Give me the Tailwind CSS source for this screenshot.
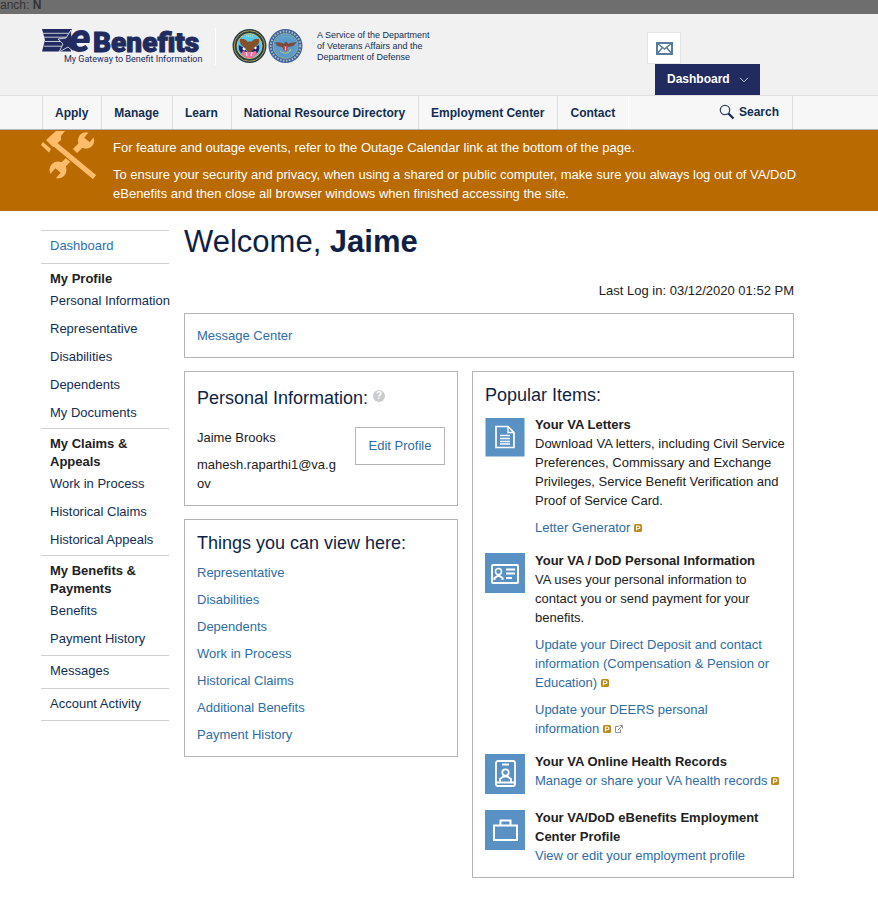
<!DOCTYPE html>
<html lang="en">
<head>
<meta charset="utf-8">
<meta name="viewport" content="width=device-width, initial-scale=1">
<title>eBenefits Dashboard</title>
<script src="https://cdn.jsdelivr.net/npm/@tailwindcss/browser@4"></script>
</head>
<body class="bg-white font-['Liberation_Sans',Arial,sans-serif] text-[13px] leading-[19px] text-[#212121]">
<svg class="hidden" aria-hidden="true">
  <symbol id="premium" viewBox="0 0 8 8"><rect width="8" height="8" rx="1.6" fill="#b8891b"/><path d="M2.5 6.5V2h2.1a1.3 1.3 0 0 1 0 2.7H2.5" fill="none" stroke="#fff" stroke-width="1.1"/></symbol>
</svg>

<div class="h-[14px] overflow-hidden bg-[#6e6e6e] text-[12px] text-[#333]"><p class="-mt-1 leading-[18px]">anch: <b>N</b></p></div>

<header class="bg-[#f1f1f1]">
  <div class="flex h-[81px] pl-[42px] pr-[84px]">
    <a href="#" class="mt-[14px] block h-[37px] w-[174px] border-r border-white" aria-label="eBenefits, My Gateway to Benefit Information">
      <svg width="160" height="37" viewBox="0 0 160 37" class="overflow-visible">
        <g fill="#212b5f">
          <path d="M0 1h30l-3 8 2 14.500H0L3 12z"/>
          <path d="M1 5.300h26M2 9.200h23M3 13.500h18M2 18.200h20" stroke="#f1f1f1" stroke-width=".8"/>
          <path d="M29 2l1 8 9 1-8 5 1 8-6-5-9 5 4-8-5-5 8-1z" stroke="#f1f1f1" stroke-width=".8"/>
          <text x="27" y="23.500" font-family="Roboto, sans-serif" font-weight="900" font-style="italic" font-size="41">e</text>
          <text x="51" y="23.500" font-family="Roboto, sans-serif" font-weight="900" font-size="28" stroke="#212b5f" stroke-width="1">Benefits</text>
          <text x="22" y="34" font-family="Roboto, sans-serif" font-weight="400" font-size="9">My Gateway to Benefit Information</text>
        </g>
      </svg>
    </a>
    <div class="ml-4 mt-[14px] flex gap-px">
      <svg width="35" height="36" viewBox="0 0 35 36" role="img" aria-label="Department of Veterans Affairs seal">
        <circle cx="17.500" cy="18" r="17" fill="#29404a"/><circle cx="17.500" cy="18" r="15.300" fill="none" stroke="#a9984b" stroke-width="1"/>
        <circle cx="17.500" cy="18" r="12.500" fill="#54c8ee" stroke="#d8c05a"/>
        <path d="M7 17l5 3 5 6 5-6 5-3c1 5-1 8-4 10H12c-4-2-6-5-5-10z" fill="#24246e"/>
        <path d="M11 23l3 1 3-1 3 1 4-1 1 3-5 4h-6l-5-4z" fill="#f0729a"/><path d="M14 24l1 4M20 24l-1 4" stroke="#fff" fill="none"/>
        <path d="M8 11c4-1 6 1 8 3l2-1 1 1c2-2 4-4 8-3 1 5-2 7-5 9l-3 4h-3l-3-4c-3-2-6-4-5-9z" fill="#85512a"/>
        <path d="M11 20l2 2M23 21l1-2" stroke="#fff" stroke-width="2" fill="none"/><path d="M14 8h7" stroke="#d5efbd" stroke-dasharray="1 1"/>
      </svg>
      <svg width="35" height="36" viewBox="0 0 35 36" role="img" aria-label="Department of Defense seal">
        <circle cx="17.500" cy="18" r="17" fill="#3f639b"/><circle cx="17.500" cy="18" r="14.700" fill="none" stroke="#aebccc" stroke-width="2" stroke-dasharray="1.500 1.500"/>
        <circle cx="17.500" cy="18" r="12.500" fill="#5b9bcb" stroke="#8fae8f"/>
        <path d="M9 13a10 10 0 0 1 17 0" stroke="#8cb8b0" stroke-dasharray="1 1" fill="none"/>
        <path d="M7 14l7 1 2 1 1-2 2 0 1 2 2-1 7-1-4 4-5 1-2 3h-2l-2-3-5-1z" fill="#7b4a3d"/>
        <path d="M15.500 18h4v4l-2 2-2-2z" fill="#c44c56"/><path d="M17.500 18.500v4" stroke="#fff" stroke-width=".7"/>
        <path d="M12 23c3 3 8 3 11-1M21 24l2-3" stroke="#bfc46a" fill="none"/>
      </svg>
    </div>
    <p class="ml-[14px] mt-4 w-[120px] text-[9px] leading-[11px] text-[#112e51]">A Service of the Department of Veterans Affairs and the Department of Defense</p>
    <div class="ml-auto mr-[34px] mt-[18px] flex flex-col">
      <a href="#" aria-label="Messages" class="-ml-2 flex h-8 w-[34px] items-center justify-center border border-[#e4e4e4] bg-white">
        <svg width="17" height="13" viewBox="0 0 17 13" fill="none" stroke="#587b9b"><rect x="1" y="1" width="15" height="11" stroke-width="2"/><path d="M1 1l7.500 6L16 1M1 12l5-6M16 12l-5-6" stroke-width="1.500"/></svg>
      </a>
      <button type="button" class="flex h-[31px] w-[105px] items-center gap-[9px] bg-[#212b5f] pl-3 text-[12px] font-bold text-white">Dashboard
        <svg width="10" height="6" viewBox="0 0 10 6" fill="none" stroke="#c8cce0"><path d="M1 .800l4 4 4-4"/></svg>
      </button>
    </div>
  </div>
  <nav aria-label="Main" class="flex h-[35px] border-b border-t border-b-[#b5b5b5] border-t-[#dfdfdf] bg-[#f7f7f7] pl-[42px] pr-[85px] text-[12px] font-bold leading-[34px] text-[#112e51]">
    <a href="#" class="border-l border-[#ddd] pl-3 pr-[13px]">Apply</a>
    <a href="#" class="border-l border-[#ddd] pl-3 pr-[13px]">Manage</a>
    <a href="#" class="border-l border-[#ddd] pl-3 pr-[13px]">Learn</a>
    <a href="#" class="border-l border-[#ddd] pl-3 pr-[13px]">National Resource Directory</a>
    <a href="#" class="border-l border-[#ddd] pl-3 pr-[13px]">Employment Center</a>
    <a href="#" class="border-l border-[#ddd] pl-3 pr-[13px]">Contact</a>
    <a href="#" class="flex flex-1 items-center justify-end gap-1 border-l border-r border-l-white border-r-[#ddd] pb-[2px] pr-[13px] leading-[30px]">
      <svg width="16" height="16" viewBox="0 0 16 16" fill="none" stroke="#334568"><circle cx="6" cy="6" r="4.700" stroke-width="1.300"/><path d="M9.500 9.500l5 5" stroke="#17264c" stroke-width="2.200"/></svg>
      Search</a>
  </nav>
</header>

<section aria-label="Notices" class="flex h-[81px] bg-[#b96a00] pl-[41px] pr-[60px] text-white">
  <svg class="mt-px shrink-0" width="56" height="49" viewBox="0 0 56 49" aria-hidden="true">
    <g fill="#ffbc6b" stroke="#ffbc6b">
      <circle cx="45" cy="9.500" r="8.200" stroke="none"/><path d="M34 20l8-8" stroke-width="6"/>
      <circle cx="17" cy="39" r="8.500" stroke="none"/><path d="M28 28l-8 8" stroke-width="6"/>
    </g>
    <path d="M46 9l8-10M17 39.500l-8 9" stroke="#b96a00" stroke-width="7" fill="none"/>
    <path d="M15 10l41 34-4 5L11 15z" fill="#ffbc6b" stroke="#b96a00" stroke-width="1.200"/>
    <path d="M5 9L15 0h9l-4 5v4l-8 7z" fill="#ffbc6b"/><path d="M2 11l8 7-2 3.500L0 14z" fill="#ffbc6b"/>
  </svg>
  <div class="ml-4 flex flex-col gap-2 pt-2">
    <p>For feature and outage events, refer to the Outage Calendar link at the bottom of the page.</p>
    <p>To ensure your security and privacy, when using a shared or public computer, make sure you always log out of VA/DoD eBenefits and then close all browser windows when finished accessing the site.</p>
  </div>
</section>

<div class="flex gap-[15px] pb-[19px] pl-[41px] pr-[84px] pt-[19px]">
  <nav aria-label="Account" class="w-32 shrink-0 self-start border-b border-[#d0d0d0] leading-[18px] text-[#112e51]">
    <a href="#" class="block border-t border-[#d0d0d0] pb-2 pl-[9px] pt-[6px] text-[#2e6fb0]">Dashboard</a>
    <div class="border-t border-[#d0d0d0] pb-[6px] pl-[9px] pt-[6px]">
      <h2 class="font-bold text-[#212121]">My Profile</h2>
      <ul class="flex flex-col gap-[10px] whitespace-nowrap pt-1">
        <li><a href="#">Personal Information</a></li><li><a href="#">Representative</a></li><li><a href="#">Disabilities</a></li><li><a href="#">Dependents</a></li><li><a href="#">My Documents</a></li>
      </ul>
    </div>
    <div class="border-t border-[#d0d0d0] pb-[6px] pl-[9px] pt-[6px]">
      <h2 class="w-24 font-bold text-[#212121]">My Claims &amp; Appeals</h2>
      <ul class="flex flex-col gap-[10px] whitespace-nowrap pt-1">
        <li><a href="#">Work in Process</a></li><li><a href="#">Historical Claims</a></li><li><a href="#">Historical Appeals</a></li>
      </ul>
    </div>
    <div class="border-t border-[#d0d0d0] pb-[7px] pl-[9px] pt-[6px]">
      <h2 class="w-24 font-bold text-[#212121]">My Benefits &amp; Payments</h2>
      <ul class="flex flex-col gap-[10px] whitespace-nowrap pt-1">
        <li><a href="#">Benefits</a></li><li><a href="#">Payment History</a></li>
      </ul>
    </div>
    <a href="#" class="block border-t border-[#d0d0d0] pb-2 pl-[9px] pt-[6px]">Messages</a>
    <a href="#" class="block border-t border-[#d0d0d0] pb-[7px] pl-[9px] pt-[6px]">Account Activity</a>
  </nav>

  <main class="min-w-0 flex-1">
    <h1 class="-mt-2 text-[31px] leading-10 text-[#101f45]">Welcome, <b>Jaime</b></h1>
    <p class="mt-[19px] text-right">Last Log in: 03/12/2020 01:52 PM</p>
    <div class="mt-[13px] border border-[#b5b5b5] px-3 py-3 text-[#2e6da4]"><a href="#">Message Center</a></div>
    <div class="mt-[13px] grid grid-cols-[274fr_322fr] items-start gap-[14px]">
      <div class="flex flex-col gap-[13px]">
        <section class="border border-[#b5b5b5] px-3 pb-3 pt-[15px]">
          <div class="flex gap-[5px]">
            <h2 class="text-[18px] leading-[22px] text-[#101f45]">Personal Information:</h2>
            <button type="button" aria-label="Help" class="mt-[3px] h-3 w-3 rounded-full bg-[#cbcbcb] text-[10px] font-bold leading-3 text-white">?</button>
          </div>
          <div class="mt-[18px] flex items-start justify-between">
            <div class="flex w-[140px] flex-col gap-2 pt-px"><p>Jaime Brooks</p><p class="break-all">mahesh.raparthi1@va.gov</p></div>
            <button type="button" class="h-[38px] w-[90px] border border-[#b5b5b5] pb-[2px] text-[#2e6da4]">Edit Profile</button>
          </div>
        </section>
        <section class="border border-[#b5b5b5] p-3">
          <h2 class="text-[18px] leading-[22px] text-[#101f45]">Things you can view here:</h2>
          <ul class="mt-[9px] flex flex-col gap-2 text-[#2e6da4]">
            <li><a href="#">Representative</a></li><li><a href="#">Disabilities</a></li><li><a href="#">Dependents</a></li><li><a href="#">Work in Process</a></li><li><a href="#">Historical Claims</a></li><li><a href="#">Additional Benefits</a></li><li><a href="#">Payment History</a></li>
          </ul>
        </section>
      </div>
      <section class="border border-[#b5b5b5] py-3 pl-3 pr-1">
        <h2 class="text-[18px] leading-[22px] text-[#101f45]">Popular Items:</h2>
        <div class="mt-[9px] flex flex-col gap-[14px]">
          <article class="flex items-start gap-[10px]">
            <svg class="mt-[2px] shrink-0" width="40" height="40" viewBox="0 0 40 40" aria-hidden="true"><rect x=".5" y="1" width="39" height="38.500" fill="#5a91c4"/><g fill="none" stroke="#fff" stroke-width="1.700"><path d="M11 9.500h12l6 6V30.500H11z"/><path d="M23 9.500v6h6M15 18.500h10M15 21.500h10M15 24.500h10M15 27h10" stroke-width="1.300"/></g></svg>
            <div>
              <h3 class="font-bold">Your VA Letters</h3>
              <p>Download VA letters, including Civil Service Preferences, Commissary and Exchange Privileges, Service Benefit Verification and Proof of Service Card.</p>
              <p class="mt-2 text-[#2e6da4]"><a href="#">Letter Generator</a> <svg class="inline-block align-baseline" width="8" height="8"><use href="#premium"/></svg></p>
            </div>
          </article>
          <article class="flex items-start gap-[10px]">
            <svg class="mt-[2px] shrink-0" width="40" height="40" viewBox="0 0 40 40" aria-hidden="true"><rect width="40" height="40" fill="#5a91c4"/><g fill="none" stroke="#fff" stroke-width="1.500"><rect x="7" y="12" width="26" height="18" rx="1" stroke-width="2"/><circle cx="13.500" cy="18.500" r="3"/><path d="M9.500 27v-2l3-2h2l3 2v2M21 16.500h9M21 20.500h9M21 25h6" stroke-width="2"/></g></svg>
            <div>
              <h3 class="font-bold">Your VA / DoD Personal Information</h3>
              <p class="pr-8">VA uses your personal information to contact you or send payment for your benefits.</p>
              <p class="mt-2 text-[#2e6da4]"><a href="#">Update your Direct Deposit and contact information (Compensation &amp; Pension or Education)</a> <svg class="inline-block align-baseline" width="8" height="8"><use href="#premium"/></svg></p>
              <p class="mt-2 pr-14 text-[#2e6da4]"><a href="#">Update your DEERS personal information</a> <svg class="inline-block align-baseline" width="8" height="8"><use href="#premium"/></svg> <svg class="inline-block align-baseline" width="8" height="8" viewBox="0 0 8 8" fill="none" stroke="#8d8d8d"><path d="M3.500 1.500h-3v6h5v-3M3 5l4-4M4.500.500h3v3"/></svg></p>
            </div>
          </article>
          <article class="flex items-start gap-[10px]">
            <svg class="mt-[2px] shrink-0" width="40" height="40" viewBox="0 0 40 40" aria-hidden="true"><rect width="40" height="40" fill="#5a91c4"/><g fill="none" stroke="#fff" stroke-width="1.800"><rect x="11" y="7" width="19" height="25" rx="2"/><path d="M17 10.500h7M11 28.500h19"/><circle cx="20.500" cy="18.500" r="3.200" stroke-width="1.800"/><path d="M15 28v-3l3.500-2.500h4L26 25v3" stroke-width="1.800"/></g></svg>
            <div>
              <h3 class="font-bold">Your VA Online Health Records</h3>
              <p class="whitespace-nowrap text-[#2e6da4]"><a href="#">Manage or share your VA health records</a> <svg class="inline-block align-baseline" width="8" height="8"><use href="#premium"/></svg></p>
            </div>
          </article>
          <article class="flex items-start gap-[10px]">
            <svg class="mt-[2px] shrink-0" width="40" height="40" viewBox="0 0 40 40" aria-hidden="true"><rect width="40" height="40" fill="#5a91c4"/><g fill="none" stroke="#fff" stroke-width="2"><path d="M9 15.500h23V30H9zM15.500 15v-4.500h10V15"/></g></svg>
            <div>
              <h3 class="font-bold">Your VA/DoD eBenefits Employment Center Profile</h3>
              <p class="text-[#2e6da4]"><a href="#">View or edit your employment profile</a></p>
            </div>
          </article>
        </div>
      </section>
    </div>
  </main>
</div>
</body>
</html>
